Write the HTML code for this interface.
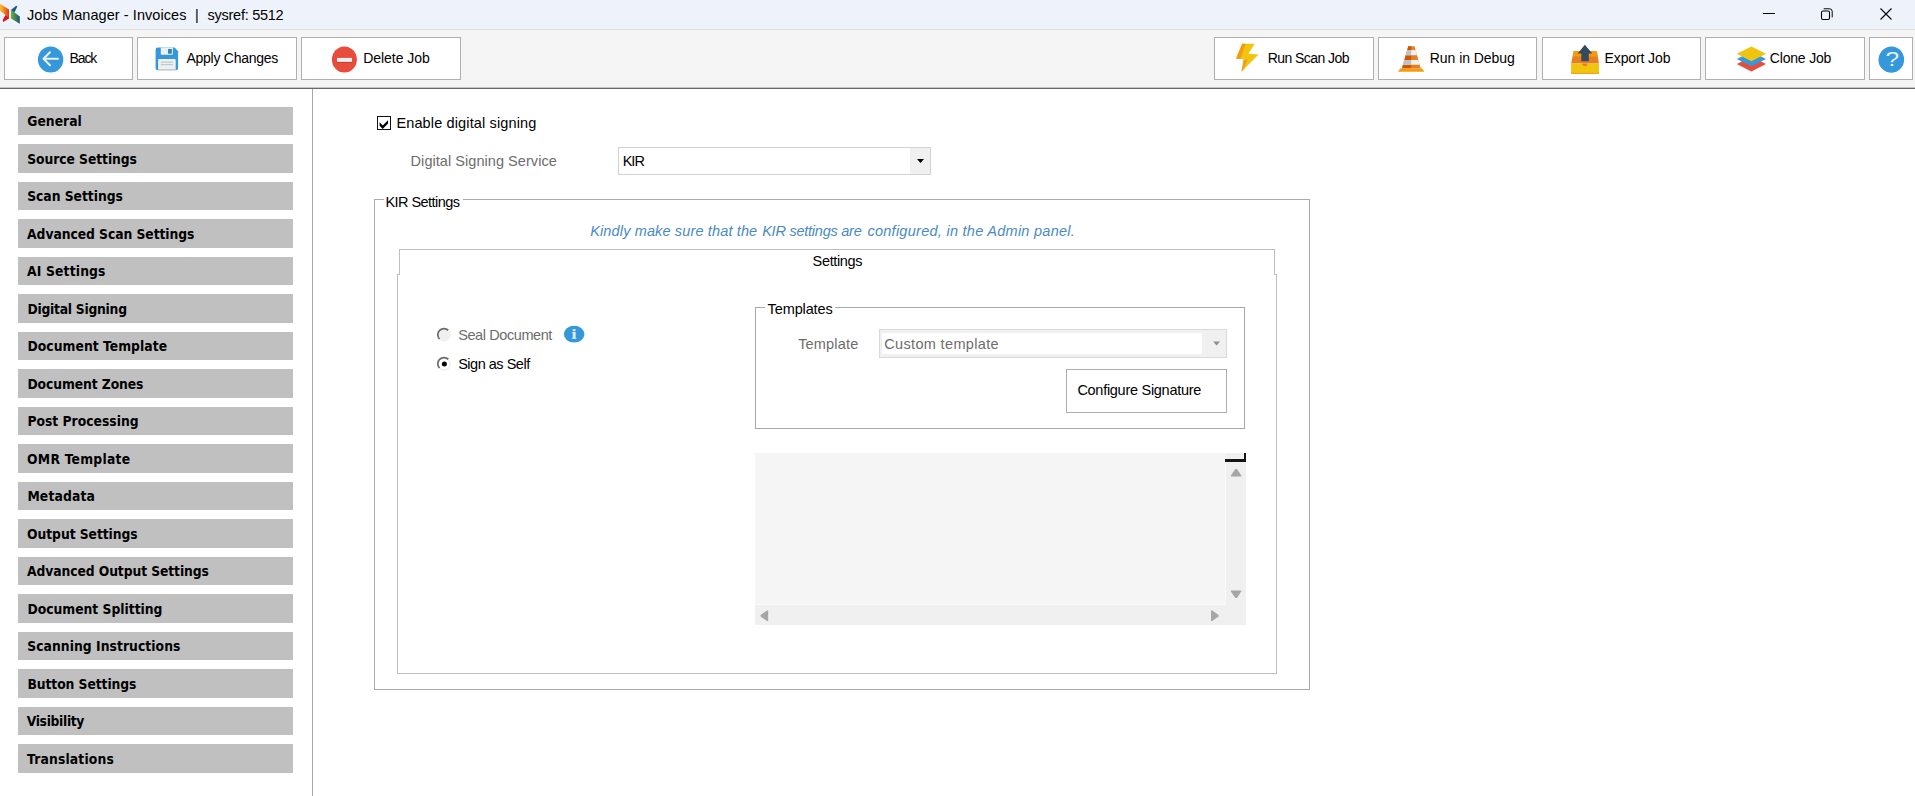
<!DOCTYPE html>
<html lang="en">
<head>
<meta charset="utf-8">
<title>Jobs Manager - Invoices</title>
<style>
*{box-sizing:border-box;margin:0;padding:0}
html,body{width:1915px;height:796px;overflow:hidden;background:#fff}
body{position:relative;font-family:"Liberation Sans",sans-serif;font-size:14.5px;color:#000}
.abs{position:absolute}
.t{position:absolute;white-space:nowrap;line-height:1}
#titlebar{left:0;top:0;width:1915px;height:29px;background:#eef3fb}
#toolbar{left:0;top:29px;width:1915px;height:59px;background:#f5f5f5;border-top:1px solid #dddddd}
#tbline{left:0;top:87px;width:1915px;height:2px;background:linear-gradient(#c4c4c4 0 50%,#6a6a6a 50% 100%)}
.tbtn{position:absolute;top:37px;height:43px;width:160px;background:#fff;border:1px solid #b0b0b0}
.tbtn svg{position:absolute}
.tbtn .t{font-size:14px;top:13px}
#vsep{left:312px;top:89px;width:1px;height:707px;background:#a8a8a8}
.nav{position:absolute;left:18px;width:275px;height:29px;background:#c0c0c0;font-family:"DejaVu Sans Condensed","DejaVu Sans","Liberation Sans",sans-serif;font-weight:bold;font-size:13.75px;line-height:28px;padding-left:8.5px;white-space:nowrap;color:#000}
.gray{color:#6d6d6d}
.line{position:absolute;background:#bcbcbc}
</style>
</head>
<body>
<!-- title bar -->
<div class="abs" id="titlebar"></div>
<svg class="abs" style="left:0;top:0" width="22" height="28" viewBox="0 0 22 28">
  <defs>
    <linearGradient id="lg1" x1="0" y1="0" x2="1" y2="0"><stop offset="0" stop-color="#fbbd3a"/><stop offset="0.45" stop-color="#f28a1e"/><stop offset="1" stop-color="#e4311c"/></linearGradient>
    <linearGradient id="lg2" x1="0" y1="0" x2="1" y2="0"><stop offset="0" stop-color="#6db33a"/><stop offset="1" stop-color="#1c5570"/></linearGradient>
  </defs>
  <path d="M0 3.8 L9 9.4 L9 18 L0 10.6 Z" fill="url(#lg1)"/>
  <path d="M5.6 15 L9 17.6 L9 18.4 L3.2 22 L2.7 20 Z" fill="#d9141f"/>
  <path d="M10.9 10 L16.2 5.7 L17.4 6.4 L14.3 12.8 Z" fill="#1b5c86"/>
  <path d="M10.9 9.8 L19.8 16.6 L19.8 23.8 L10.9 18.4 Z" fill="url(#lg2)"/>
</svg>
<div class="t" id="title" style="left:27px;top:8px;font-size:14.5px;letter-spacing:0.07px">Jobs Manager - Invoices</div>
<div class="t" id="tbar" style="left:195px;top:8px;font-size:14.5px">|</div>
<div class="t" id="title2" style="left:207.6px;top:8px;font-size:14.5px;letter-spacing:-0.27px">sysref: 5512</div>
<!-- window controls -->
<svg class="abs" style="left:1755px;top:0" width="160" height="29" viewBox="0 0 160 29">
  <path d="M8 13.5 H20" stroke="#000" stroke-width="1" fill="none"/>
  <rect x="66.5" y="11" width="8" height="8.5" rx="1.5" stroke="#000" stroke-width="1.1" fill="none"/>
  <path d="M68.7 8.8 H74.6 a2.6 2.6 0 0 1 2.6 2.6 V17.4" stroke="#000" stroke-width="1" fill="none"/>
  <path d="M125.5 8.5 L136.5 19.5 M136.5 8.5 L125.5 19.5" stroke="#000" stroke-width="1.1" fill="none"/>
</svg>

<!-- toolbar -->
<div class="abs" id="toolbar"></div>
<div class="abs" id="tbline"></div>

<div class="tbtn" id="b1" style="left:4px;width:129px">
  <div class="t" id="tt1" style="left:64.6px;letter-spacing:-1.13px">Back</div>
</div>
<div class="tbtn" id="b2" style="left:137px">
  <div class="t" id="tt2" style="left:48.4px;letter-spacing:-0.25px">Apply Changes</div>
</div>
<div class="tbtn" id="b3" style="left:301px">
  <div class="t" id="tt3" style="left:61.2px;letter-spacing:-0.03px">Delete Job</div>
</div>

<div class="tbtn" id="b4" style="left:1214px">
  <div class="t" id="tt4" style="left:52.8px;letter-spacing:-0.57px">Run Scan Job</div>
</div>
<div class="tbtn" id="b5" style="left:1378px;width:159px">
  <div class="t" id="tt5" style="left:50.8px;letter-spacing:-0.06px">Run in Debug</div>
</div>
<div class="tbtn" id="b6" style="left:1542px;width:159px">
  <div class="t" id="tt6" style="left:61.6px;letter-spacing:-0.12px">Export Job</div>
</div>
<div class="tbtn" id="b7" style="left:1705px">
  <div class="t" id="tt7" style="left:63.8px;letter-spacing:-0.18px">Clone Job</div>
</div>
<div class="tbtn" id="b8" style="left:1869px;width:44px">
  <svg style="left:8px;top:9px" width="26" height="26" viewBox="0 0 26 26"><circle cx="13" cy="13" r="12.5" fill="#3498db"/><text x="13" y="19.5" text-anchor="middle" font-family="Liberation Sans, sans-serif" font-weight="bold" font-size="18" fill="#fff">?</text></svg>
</div>

<svg class="abs" id="icons" style="left:0;top:0;pointer-events:none" width="1915" height="88" viewBox="0 0 1915 88">
  <!-- back -->
  <ellipse cx="50.6" cy="59.5" rx="12.7" ry="13.1" fill="#3498db"/>
  <path d="M58 58.8 H44 M50 52.3 L43.5 58.8 L50 65.3" stroke="#ecf0f1" stroke-width="2" fill="none" stroke-linecap="round" stroke-linejoin="round"/>
  <!-- save -->
  <path d="M155.6 49.7 a2.2 2.2 0 0 1 2.2 -2.2 H174.6 L178.1 51.3 V68 a2.2 2.2 0 0 1 -2.2 2.2 H157.8 a2.2 2.2 0 0 1 -2.2 -2.2 Z" fill="#3498db"/>
  <path d="M160.8 47.5 H172.9 V54 a0.8 0.8 0 0 1 -0.8 0.8 H161.6 a0.8 0.8 0 0 1 -0.8 -0.8 Z" fill="#ecf0f1"/>
  <rect x="168" y="49" width="3.9" height="4.7" fill="#2e86c8"/>
  <path d="M158.1 60 a0.9 0.9 0 0 1 0.9 -0.9 H174.8 a0.9 0.9 0 0 1 0.9 0.9 V70.2 H158.1 Z" fill="#ecf0f1"/>
  <rect x="158.1" y="69.2" width="17.6" height="1" fill="#bdc3c7"/>
  <rect x="160.8" y="61.6" width="12.1" height="1.1" fill="#bdc3c7"/>
  <rect x="160.8" y="64.1" width="12.1" height="1.1" fill="#bdc3c7"/>
  <!-- delete -->
  <ellipse cx="344.4" cy="59.5" rx="12.5" ry="13.1" fill="#e74c3c"/>
  <rect x="337" y="58.6" width="15" height="4" fill="#c0392b"/>
  <rect x="337" y="57.9" width="15" height="4" fill="#ecf0f1"/>
  <!-- lightning -->
  <path d="M1242.2 43.8 H1254.8 L1248.4 53.7 L1258.6 54.4 L1241.4 71.8 L1246.5 59.5 L1236 58.5 Z" fill="#f1c40f"/>
  <path d="M1242.2 43.8 H1245.6 L1240.4 58.9 L1236 58.5 Z" fill="#f39c12"/>
  <path d="M1243.6 59.3 L1247.6 59.6 L1243.2 70 L1241.4 71.8 Z" fill="#f39c12"/>
  <!-- cone -->
  <path d="M1408.3 46.2 H1414.5 L1420.7 68.3 H1402 Z" fill="#e67e22"/>
  <path d="M1408.3 46.2 H1411.2 V68.3 H1402 Z" fill="#d35400"/>
  <path d="M1407.2 50 H1415.6 L1417 55.2 H1405.8 Z" fill="#ecf0f1"/>
  <path d="M1407.2 50 H1411.2 V55.2 H1405.8 Z" fill="#bdc3c7"/>
  <path d="M1404.4 60 H1418.4 L1419.7 64.7 H1403 Z" fill="#ecf0f1"/>
  <path d="M1404.4 60 H1411.2 V64.7 H1403 Z" fill="#bdc3c7"/>
  <path d="M1400.6 68.3 H1421.8 L1424 71 V71.8 H1398.4 V71 Z" fill="#f39c12"/>
  <!-- export -->
  <path d="M1573.6 51.2 H1596.8 L1599 63.6 H1571.1 Z" fill="#e67e22"/>
  <path d="M1573.6 51.2 H1596.8 L1597.8 56.6 H1572.6 Z" fill="#f39c12"/>
  <rect x="1571.1" y="63.6" width="27.9" height="10.2" fill="#f1c40f"/>
  <rect x="1571.1" y="72.8" width="27.9" height="1" fill="#f39c12"/>
  <path d="M1581.6 63.6 H1588 L1586 66 H1583.6 Z" fill="#e67e22"/>
  <path d="M1584.8 44.7 L1592.3 53.5 H1588.8 V61.2 H1581.3 V53.5 H1577.7 Z" fill="#34495e"/>
  <!-- clone -->
  <path d="M1751.4 56.6 L1766 64 L1751.4 71.4 L1736.8 64 Z" fill="#e74c3c"/>
  <path d="M1751.4 51.5 L1766 58.9 L1751.4 66.3 L1736.8 58.9 Z" fill="#3498db"/>
  <path d="M1751.4 46.4 L1766 53.8 L1751.4 61.2 L1736.8 53.8 Z" fill="#f1c40f"/>
  <!-- help -->
  <ellipse cx="1891.5" cy="59.5" rx="12.6" ry="13.1" fill="#3498db"/>
  <text transform="translate(1892.4 66.4) scale(1.25 1)" text-anchor="middle" font-family="Liberation Sans, sans-serif" font-size="19.5" fill="#ecf0f1">?</text>
</svg>

<!-- sidebar -->
<div class="abs" id="vsep"></div>
<div class="nav" id="n0" style="top:107px;height:28px"><span id="ns0" style="position:relative;left:0.7px;letter-spacing:0.04px">General</span></div>
<div class="nav" id="n1" style="top:144px;height:29px;line-height:30px"><span id="ns1" style="position:relative;left:0.7px;letter-spacing:-0.07px">Source Settings</span></div>
<div class="nav" id="n2" style="top:182px;height:28px"><span id="ns2" style="position:relative;left:0.7px;letter-spacing:-0.03px">Scan Settings</span></div>
<div class="nav" id="n3" style="top:219px;height:29px;line-height:30px"><span id="ns3" style="position:relative;left:0.6px;letter-spacing:-0.06px">Advanced Scan Settings</span></div>
<div class="nav" id="n4" style="top:257px;height:28px"><span id="ns4" style="position:relative;left:0.6px;letter-spacing:0.15px">AI Settings</span></div>
<div class="nav" id="n5" style="top:294px;height:29px;line-height:30px"><span id="ns5" style="position:relative;left:0.9px;letter-spacing:-0.25px">Digital Signing</span></div>
<div class="nav" id="n6" style="top:332px;height:28px"><span id="ns6" style="position:relative;left:0.9px;letter-spacing:0.05px">Document Template</span></div>
<div class="nav" id="n7" style="top:369px;height:29px;line-height:30px"><span id="ns7" style="position:relative;left:0.9px;letter-spacing:-0.09px">Document Zones</span></div>
<div class="nav" id="n8" style="top:407px;height:28px"><span id="ns8" style="position:relative;left:0.9px;letter-spacing:-0px">Post Processing</span></div>
<div class="nav" id="n9" style="top:444px;height:29px;line-height:30px"><span id="ns9" style="position:relative;left:0.6px;letter-spacing:0.24px">OMR Template</span></div>
<div class="nav" id="n10" style="top:482px;height:28px"><span id="ns10" style="position:relative;left:0.9px;letter-spacing:0.15px">Metadata</span></div>
<div class="nav" id="n11" style="top:519px;height:29px;line-height:30px"><span id="ns11" style="position:relative;left:0.6px;letter-spacing:-0.07px">Output Settings</span></div>
<div class="nav" id="n12" style="top:557px;height:28px"><span id="ns12" style="position:relative;left:0.6px;letter-spacing:-0.1px">Advanced Output Settings</span></div>
<div class="nav" id="n13" style="top:594px;height:29px;line-height:30px"><span id="ns13" style="position:relative;left:0.9px;letter-spacing:-0.01px">Document Splitting</span></div>
<div class="nav" id="n14" style="top:632px;height:28px"><span id="ns14" style="position:relative;left:0.7px;letter-spacing:0.05px">Scanning Instructions</span></div>
<div class="nav" id="n15" style="top:669px;height:29px;line-height:30px"><span id="ns15" style="position:relative;left:0.9px;letter-spacing:-0.07px">Button Settings</span></div>
<div class="nav" id="n16" style="top:707px;height:28px"><span id="ns16" style="position:relative;left:0.2px;letter-spacing:-0.33px">Visibility</span></div>
<div class="nav" id="n17" style="top:744px;height:29px;line-height:30px"><span id="ns17" style="position:relative;left:0.6px;letter-spacing:0.16px">Translations</span></div>

<!-- MAIN -->
<!-- checkbox -->
<div class="abs" style="left:377px;top:116px;width:14px;height:14px;border:1px solid #111;background:#fff"></div>
<svg class="abs" style="left:377px;top:116px" width="14" height="14" viewBox="0 0 14 14"><path d="M2.6 6.2 L5.7 9.4 L11 4.2 V7.6 L5.7 12.9 L2.6 9.7 Z" fill="#000"/></svg>
<div class="t" id="enable" style="left:396.4px;top:116px;letter-spacing:0.14px">Enable digital signing</div>

<div class="t gray" id="dss" style="left:410.6px;top:154px;letter-spacing:0.05px">Digital Signing Service</div>
<!-- combo -->
<div class="abs" style="left:618px;top:147px;width:313px;height:28px;border:1px solid #d2d2d2;background:#fff"></div>
<div class="abs" style="left:910px;top:148px;width:20px;height:26px;background:#f0f0f0"></div>
<svg class="abs" style="left:917px;top:159px" width="8" height="5" viewBox="0 0 8 5"><path d="M0 0 H7 L3.5 4 Z" fill="#000"/></svg>
<div class="t" id="kir" style="left:622.7px;top:154px;letter-spacing:-1px">KIR</div>

<!-- KIR Settings group -->
<div class="abs" style="left:374px;top:199px;width:936px;height:491px;border:1px solid #aaaaaa"></div>
<div class="abs" style="left:384px;top:199px;width:79px;height:1px;background:#fff"></div>
<div class="t" id="kirset" style="left:385.4px;top:195px;letter-spacing:-0.54px">KIR Settings</div>
<div class="t" id="kindly" style="left:590.2px;top:224px;font-style:italic;color:#4a8ac4;letter-spacing:0.14px">Kindly make sure that the</div>
<div class="t" id="kindly2" style="left:762.2px;top:224px;font-style:italic;color:#4a8ac4;letter-spacing:-0.24px">KIR settings are</div>
<div class="t" id="kindly3" style="left:867.4px;top:224px;font-style:italic;color:#4a8ac4;letter-spacing:0.27px">configured, in the Admin panel.</div>

<!-- tab control -->
<div class="abs" style="left:397px;top:274px;width:880px;height:400px;border:1px solid #bebebe"></div>
<div class="abs" style="left:399px;top:249px;width:876px;height:26px;border:1px solid #bebebe;border-bottom:none;background:#fff"></div>
<div class="t" id="settings" style="left:812.6px;top:254px;letter-spacing:-0.35px">Settings</div>

<!-- radios -->
<svg class="abs" style="left:435px;top:326px" width="18" height="18" viewBox="0 0 18 18">
  <circle cx="9" cy="8.8" r="5.6" fill="#f0f0f0"/>
  <path d="M4.6 13.2 A6.2 6.2 0 0 1 13.4 4.4" stroke="#6a6a6a" stroke-width="1.7" fill="none"/>
  <path d="M13.4 4.4 A6.2 6.2 0 0 1 4.6 13.2" stroke="#f2f2f2" stroke-width="1.5" fill="none"/>
</svg>
<div class="t gray" id="seal" style="left:458.2px;top:328px;letter-spacing:-0.41px">Seal Document</div>
<svg class="abs" style="left:563px;top:325px" width="22" height="19" viewBox="0 0 22 19"><ellipse cx="11.15" cy="9.15" rx="10.25" ry="8.45" fill="#3498db"/><text transform="translate(11 13.9) scale(1.35 1)" text-anchor="middle" font-family="Liberation Serif, serif" font-weight="bold" font-size="14.5" fill="#dcebf5">i</text></svg>
<svg class="abs" style="left:435px;top:355px" width="18" height="18" viewBox="0 0 18 18">
  <circle cx="9" cy="8.8" r="5.6" fill="#fff"/>
  <path d="M4.6 13.2 A6.2 6.2 0 0 1 13.4 4.4" stroke="#6a6a6a" stroke-width="1.7" fill="none"/>
  <path d="M13.4 4.4 A6.2 6.2 0 0 1 4.6 13.2" stroke="#ededed" stroke-width="1.5" fill="none"/>
  <circle cx="9.4" cy="8.9" r="2.5" fill="#000"/>
</svg>
<div class="t" id="sign" style="left:458.2px;top:357px;letter-spacing:-0.49px">Sign as Self</div>

<!-- Templates group -->
<div class="abs" style="left:755px;top:307px;width:490px;height:122px;border:1px solid #aaaaaa"></div>
<div class="abs" style="left:765px;top:307px;width:70px;height:1px;background:#fff"></div>
<div class="t" id="templates" style="left:767.6px;top:302px;letter-spacing:-0.12px">Templates</div>
<div class="t gray" id="template" style="left:798.2px;top:337px;letter-spacing:0.18px">Template</div>
<div class="abs" style="left:879px;top:329px;width:348px;height:29px;border:1px solid #d9d9d9;background:#f0f0f0"></div>
<div class="abs" style="left:882px;top:333px;width:320px;height:21px;background:#fff"></div>
<svg class="abs" style="left:1213px;top:341px" width="8" height="5" viewBox="0 0 8 5"><path d="M0.2 0.5 H7 L3.6 4.5 Z" fill="#8c8c8c"/></svg>
<div class="t gray" id="custom" style="left:884.2px;top:337px;letter-spacing:0.35px">Custom template</div>
<div class="abs" style="left:1066px;top:369px;width:161px;height:44px;border:1px solid #adadad;background:#fff"></div>
<div class="t" id="conf" style="left:1077.4px;top:383px;letter-spacing:-0.28px">Configure Signature</div>

<!-- preview panel -->
<div class="abs" style="left:755px;top:453px;width:491px;height:172px;background:#f0f0f0"></div>
<div class="abs" style="left:755px;top:453px;width:470px;height:151px;background:#f5f5f5"></div>
<div class="abs" style="left:1225px;top:459px;width:21px;height:3px;background:#151515"></div>
<div class="abs" style="left:1244px;top:453px;width:2px;height:9px;background:#151515"></div>
<div class="abs" style="left:1225px;top:462px;width:1px;height:142px;background:#fafafa"></div>
<div class="abs" style="left:755px;top:604px;width:471px;height:1px;background:#fafafa"></div>
<svg class="abs" style="left:1230px;top:468px" width="12" height="9" viewBox="0 0 12 9"><path d="M5.3 1 H6.9 L11.3 7.4 V8.6 H0.9 V7.4 Z" fill="#a6a6a6"/></svg>
<svg class="abs" style="left:1230px;top:590px" width="12" height="9" viewBox="0 0 12 9"><path d="M5.3 8 H6.9 L11.2 1.6 V0.4 H0.9 V1.6 Z" fill="#a6a6a6"/></svg>
<svg class="abs" style="left:760px;top:610px" width="9" height="12" viewBox="0 0 9 12"><path d="M0.6 5 V6.6 L7 10.9 H8.2 V0.5 H7 Z" fill="#a6a6a6"/></svg>
<svg class="abs" style="left:1210px;top:610px" width="9" height="12" viewBox="0 0 9 12"><path d="M8.6 5 V6.6 L2.2 10.9 H1 V0.5 H2.2 Z" fill="#a6a6a6"/></svg>
</body>
</html>
